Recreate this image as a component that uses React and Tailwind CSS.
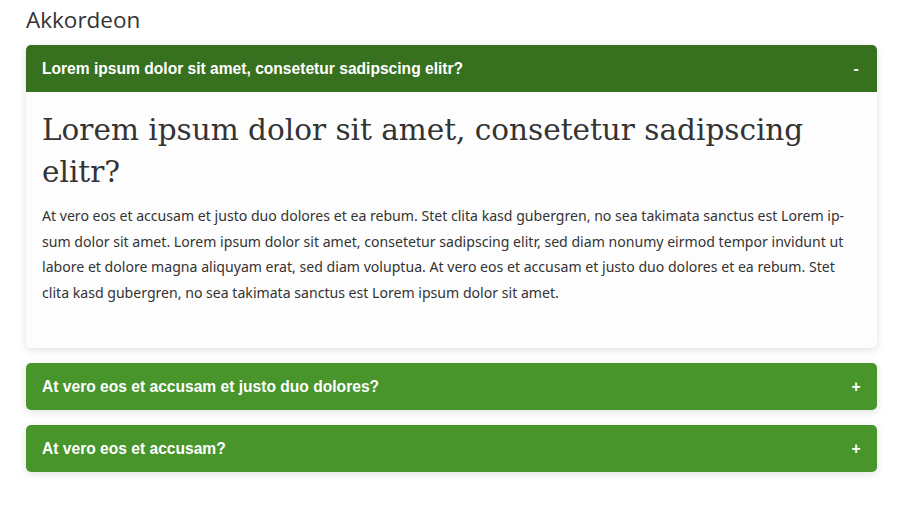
import React, { useState } from "react";

const items = [
  {
    q: "Lorem ipsum dolor sit amet, consetetur sadipscing elitr?",
  },
  { q: "At vero eos et accusam et justo duo dolores?" },
  { q: "At vero eos et accusam?" },
];

export default function App() {
  const [open, setOpen] = useState(0);
  return (
    <div className="min-h-[507px] bg-white px-[26px] pt-[6px] text-[#333]">
      <h2 className="text-[22.5px] leading-[28px] font-['Open_Sans',sans-serif] text-[#333] mb-[11px]">
        Akkordeon
      </h2>
      <div className="flex flex-col gap-[15px] w-[851px]">
        {items.map((it, i) => (
          <div
            key={i}
            className="rounded-[5px] shadow-[0_2px_8px_rgba(0,0,0,0.12)] bg-[#fdfdfd] overflow-hidden"
          >
            <button
              onClick={() => setOpen(open === i ? -1 : i)}
              className={`w-full h-[47px] flex items-center justify-between pl-[16px] pr-[16px] text-white font-bold text-[15.6px] font-['Liberation_Sans',Arial,sans-serif] ${
                open === i ? "bg-[#37701f]" : "bg-[#47952b]"
              }`}
            >
              <span>{it.q}</span>
              <span className="w-[10px] text-center">{open === i ? "-" : "+"}</span>
            </button>
            {open === i && (
              <div className="px-[16px] pt-[17px] pb-[43px]">
                <h3 className="text-[29.5px] leading-[42px] font-['DejaVu_Serif',serif] text-[#333] mb-[10px]">
                  Lorem ipsum dolor sit amet, consetetur sadipscing elitr?
                </h3>
                <p className="text-[14.1px] leading-[25.5px] font-['Noto_Sans',sans-serif] text-[#333]">
                  At vero eos et accusam et justo duo dolores et ea rebum. Stet clita kasd gubergren, no sea takimata sanctus est Lorem ip&shy;sum dolor sit amet. Lorem ipsum dolor sit amet, consetetur sadipscing elitr, sed diam nonumy eirmod tempor invidunt ut labore et dolore magna aliquyam erat, sed diam voluptua. At vero eos et accusam et justo duo dolores et ea rebum. Stet clita kasd gubergren, no sea takimata sanctus est Lorem ipsum dolor sit amet.
                </p>
              </div>
            )}
          </div>
        ))}
      </div>
    </div>
  );
}
